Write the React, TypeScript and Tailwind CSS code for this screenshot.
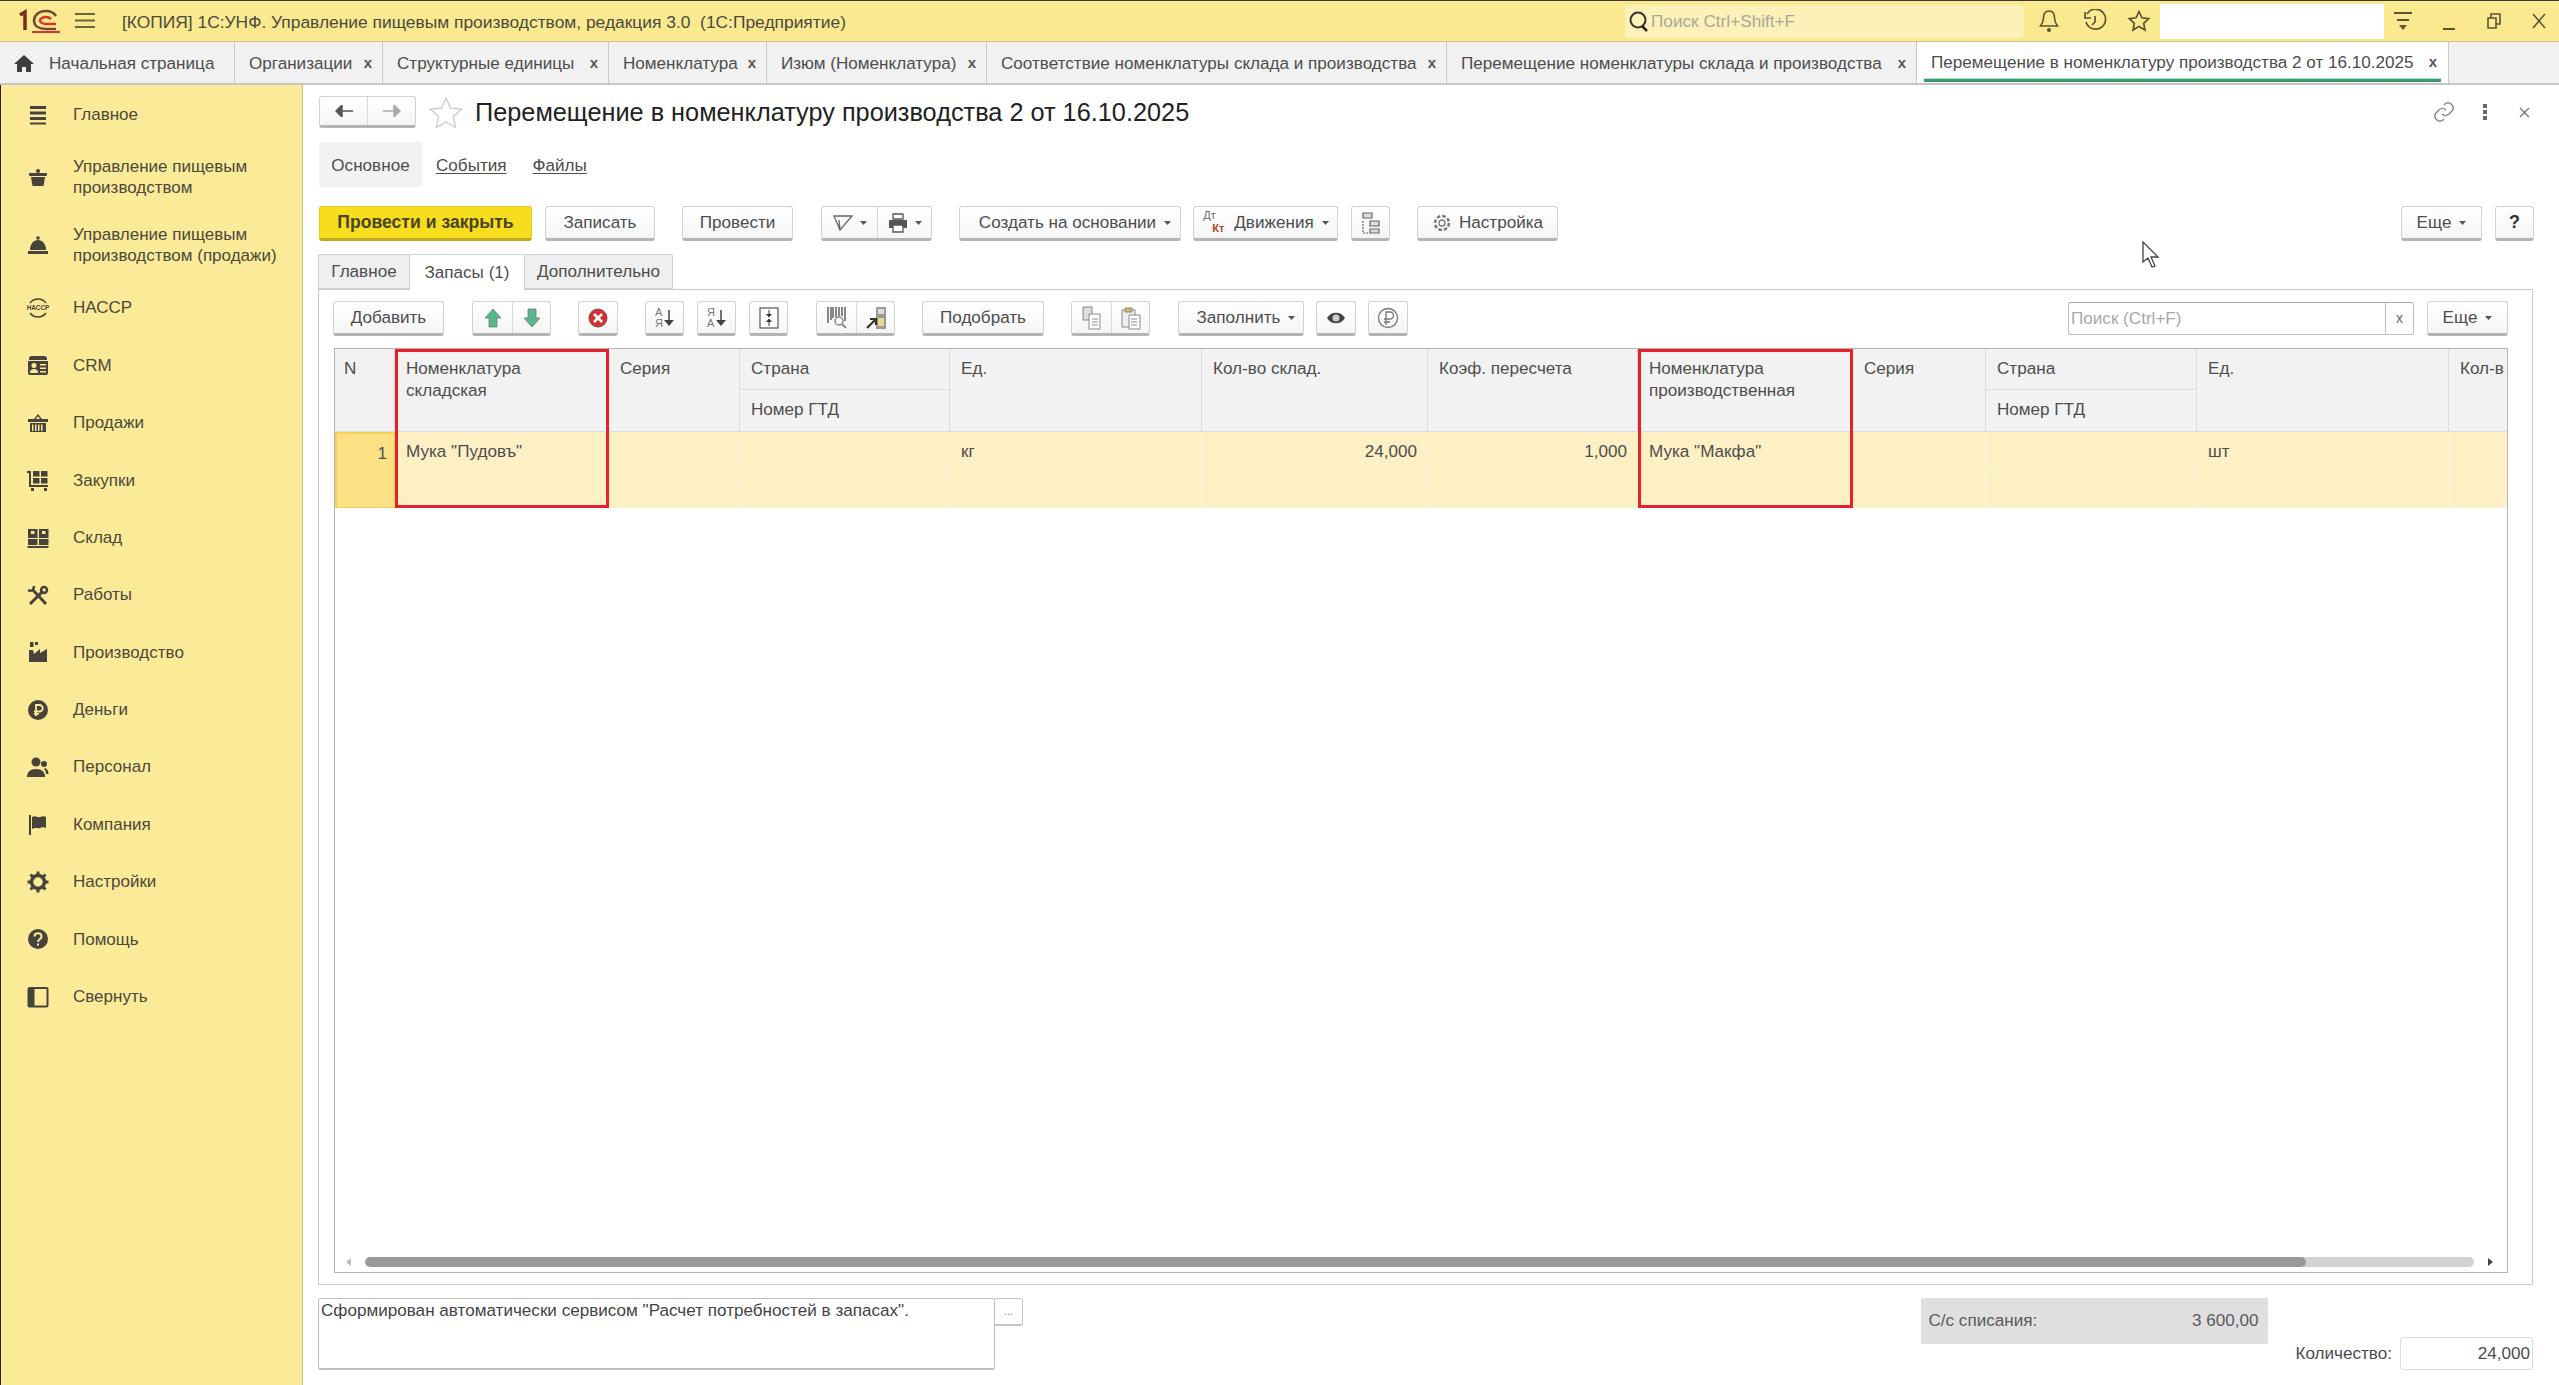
import type { ReactNode } from "react";

const font = "font-['Liberation_Sans',Arial,sans-serif]";

const btn =
  "flex items-center justify-center h-[35px] rounded-[3px] border border-[#d2d2d2] border-b-[3px] border-b-[#b4b4b4] bg-linear-to-b from-white to-[#f5f5f5] text-[#4d4d4d] text-[17.1px] shrink-0";

const Caret = ({ className = "" }: { className?: string }) => (
  <svg width="7" height="4" viewBox="0 0 7 4" className={className}>
    <path d="M0 0h7L3.500 4z" fill="#555" />
  </svg>
);

// sidebar icons, all in a 24 box
const ink = "#47433a";
const SideIcons: Record<string, ReactNode> = {
  main: (
    <g fill={ink}>
      <rect x="4" y="3" width="16" height="3" />
      <rect x="4" y="8.500" width="16" height="3" />
      <rect x="4" y="14" width="16" height="3" />
      <rect x="4" y="19.500" width="16" height="2" />
    </g>
  ),
  pot: (
    <g fill={ink}>
      <circle cx="12" cy="6" r="2" />
      <rect x="3" y="8" width="18" height="3" rx="1" />
      <path d="M5 12h14l-1.500 9h-11z" />
    </g>
  ),
  bell: (
    <g fill={ink}>
      <circle cx="12" cy="5" r="1.800" />
      <path d="M4 17c0-6 3.500-10 8-10s8 4 8 10z" />
      <rect x="2" y="18" width="20" height="3" />
    </g>
  ),
  haccp: (
    <g>
      <path d="M4 7a10 10 0 0 1 16 0M4 17a10 10 0 0 0 16 0" fill="none" stroke={ink} strokeWidth="1.500" />
      <text x="12" y="14.300" textAnchor="middle" fontSize="6.400" fontWeight="700" fill={ink} fontFamily="Liberation Sans">
        HACCP
      </text>
    </g>
  ),
  crm: (
    <g fill={ink}>
      <path d="M3 6a3 3 0 0 1 3-3h12a3 3 0 0 1 3 3v1H3z" />
      <path fillRule="evenodd" d="M2 8h20v12a2 2 0 0 1-2 2H4a2 2 0 0 1-2-2zm6 2a2.500 2.500 0 1 0 0 5 2.500 2.500 0 0 0 0-5zm-4 10h8c0-3-1.500-4-4-4s-4 1-4 4zm10-9v1.500h6V11zm0 3.500V16h6v-1.500zm0 3.500v1.500h6V18z" />
    </g>
  ),
  basket: (
    <g fill={ink}>
      <path d="M8 8l4-5 4 5h-1.800L12 5.200 9.800 8z" />
      <path fillRule="evenodd" d="M2 8h20v3H2zM4 12h16v9H4zm2 1.500V20h1.500v-6.500zm3 0V20h1.500v-6.500zm3 0V20h1.500v-6.500zm3 0V20h1.500v-6.500z" />
    </g>
  ),
  cart: (
    <g fill={ink}>
      <path d="M1 3h4v14h17v2H3V5H1z" />
      <rect x="7" y="3" width="6.500" height="5.500" />
      <rect x="15" y="3" width="6.500" height="5.500" />
      <rect x="7" y="10" width="6.500" height="5.500" />
      <rect x="15" y="10" width="6.500" height="5.500" />
      <rect x="5" y="20" width="3" height="3" />
      <rect x="18" y="20" width="3" height="3" />
    </g>
  ),
  stock: (
    <g fill={ink}>
      <path fillRule="evenodd" d="M2 3h9.500v9H2zm3 2v3h3.500V5zM13 3h9.500v9H13zm3 2v3h3.500V5z" />
      <rect x="2" y="13" width="9.500" height="6" />
      <rect x="13" y="13" width="9.500" height="6" />
      <rect x="1.500" y="20" width="21" height="2" />
    </g>
  ),
  tools: (
    <g fill="none" stroke={ink} strokeWidth="3">
      <path d="M4 21L17 8" />
      <path d="M6 6l14 15" />
      <path d="M2 7c3 2 6 0 6-4" strokeWidth="2.500" />
      <circle cx="18" cy="7" r="3" strokeWidth="2.500" />
    </g>
  ),
  factory: (
    <g fill={ink}>
      <rect x="4" y="2" width="3.500" height="5" />
      <rect x="9" y="2" width="3" height="3" />
      <path d="M3 22V10l4 0 1 4 6-5v4l7-4v13z" />
    </g>
  ),
  money: (
    <g>
      <circle cx="12" cy="12" r="10" fill={ink} />
      <path d="M10 18V7h3.500a3 3 0 0 1 0 6.500H8M8 15.800h5" fill="none" stroke="#fbeb98" strokeWidth="1.800" />
    </g>
  ),
  people: (
    <g fill={ink}>
      <circle cx="10" cy="7" r="4.500" />
      <path d="M1 22c0-5 3-8 9-8s9 3 9 8z" />
      <circle cx="18" cy="9" r="3" />
      <path d="M19 13c2 .5 3.500 2.500 3.500 6H20c0-2.500-1-4.500-2-5z" />
    </g>
  ),
  flag: (
    <g fill={ink}>
      <rect x="3" y="2" width="2" height="20" />
      <path d="M6 4c4-2 5 1 8 0s5-1 6 0v11c-2-1-4-1-6 0s-5-1-8 1z" />
    </g>
  ),
  gear: (
    <g>
      <circle cx="12" cy="12" r="6.500" fill="none" stroke={ink} strokeWidth="3.500" />
      <path d="M12 1.500v4M12 18.500v4M1.500 12h4M18.500 12h4M4.500 4.500l3 3M16.500 16.500l3 3M4.500 19.500l3-3M16.500 7.500l3-3" stroke={ink} strokeWidth="3" />
    </g>
  ),
  help: (
    <g>
      <circle cx="12" cy="12" r="10" fill={ink} />
      <path d="M8.500 9.500c0-4.500 7-4.500 7 0 0 3-3.500 2.500-3.500 5.500" fill="none" stroke="#fbeb98" strokeWidth="2" />
      <rect x="11" y="16.500" width="2" height="2" fill="#fbeb98" />
    </g>
  ),
  collapse: (
    <g>
      <rect x="2.500" y="3" width="19" height="18.500" rx="1" fill="none" stroke={ink} strokeWidth="2" />
      <rect x="2.500" y="3" width="6" height="18.500" fill={ink} />
    </g>
  ),
};

const sideItems: { icon: string; lines: string[]; two?: boolean }[] = [
  { icon: "main", lines: ["Главное"] },
  { icon: "pot", lines: ["Управление пищевым", "производством"], two: true },
  { icon: "bell", lines: ["Управление пищевым", "производством (продажи)"], two: true },
  { icon: "haccp", lines: ["НАССР"] },
  { icon: "crm", lines: ["CRM"] },
  { icon: "basket", lines: ["Продажи"] },
  { icon: "cart", lines: ["Закупки"] },
  { icon: "stock", lines: ["Склад"] },
  { icon: "tools", lines: ["Работы"] },
  { icon: "factory", lines: ["Производство"] },
  { icon: "money", lines: ["Деньги"] },
  { icon: "people", lines: ["Персонал"] },
  { icon: "flag", lines: ["Компания"] },
  { icon: "gear", lines: ["Настройки"] },
  { icon: "help", lines: ["Помощь"] },
  { icon: "collapse", lines: ["Свернуть"] },
];

const tabs = [
  { title: "Организации", w: "w-[148px]" },
  { title: "Структурные единицы", w: "w-[226px]" },
  { title: "Номенклатура", w: "w-[158px]" },
  { title: "Изюм (Номенклатура)", w: "w-[220px]" },
  { title: "Соответствие номенклатуры склада и производства", w: "w-[460px]" },
  { title: "Перемещение номенклатуры склада и производства", w: "w-[470px]" },
];

const TitleBar = () => (
  <div className="flex items-center h-[42px] shrink-0 bg-[#fbe98f] border-t border-t-[#3a3a3a] border-b border-b-[#cfc48a]">
    {/* 1C logo */}
    <svg width="44" height="26" viewBox="0 0 44 26" className="ml-[18px]">
      <path d="M2 7l5-3v18" fill="none" stroke="#7a2a20" strokeWidth="3.500" />
      <path d="M38 8c-2-3-5-5-10-5-7 0-12 4-12 9.500S21 21 28 21h10" fill="none" stroke="#6d4a36" strokeWidth="2.500" />
      <path d="M33 11c-1-1-3-2-5-2-3 0-6 1.500-6 3.500S25 16 28 16h10" fill="none" stroke="#d8352a" strokeWidth="2.500" />
      <path d="M14 24h28" stroke="#d8352a" strokeWidth="2" />
    </svg>
    <svg width="20" height="18" viewBox="0 0 20 18" className="ml-[13px]">
      <path d="M0 2h20M0 8.500h20M0 15h20" stroke="#6b6440" strokeWidth="2" />
    </svg>
    <span className="ml-[27px] pt-[2px] text-[17.4px] text-[#4a4a40] whitespace-nowrap">
      [КОПИЯ] 1С:УНФ. Управление пищевым производством, редакция 3.0&nbsp; (1С:Предприятие)
    </span>
    <div className="flex-1" />
    <div className="flex items-center w-[399px] h-[33px] rounded-[3px] bg-[#fcf1b6]">
      <svg width="22" height="24" viewBox="0 0 22 24" className="ml-[3px]">
        <circle cx="10" cy="11" r="7.500" fill="none" stroke="#333" strokeWidth="2" />
        <path d="M14 17l5 5" stroke="#222" strokeWidth="2.500" />
      </svg>
      <span className="ml-[1px] pt-[2px] text-[17.2px] text-[#a8a8a0]">Поиск Ctrl+Shift+F</span>
    </div>
    <div className="flex items-center justify-center w-[46px] ml-[2px]">
      <svg width="20" height="24" viewBox="0 0 20 24">
        <path d="M10 2c-4 0-5.500 3-5.500 7 0 4-1.500 6-3 8h17c-1.500-2-3-4-3-8 0-4-1.500-7-5.500-7z" fill="none" stroke="#5a5436" strokeWidth="1.600" />
        <circle cx="10" cy="21" r="2" fill="#5a5436" />
      </svg>
    </div>
    <div className="flex items-center justify-center w-[46px]">
      <svg width="24" height="24" viewBox="0 0 24 24">
        <path d="M4 5a10 10 0 1 1-1 8" fill="none" stroke="#5a5436" strokeWidth="1.700" />
        <path d="M2 3v6h6" fill="none" stroke="#5a5436" strokeWidth="1.700" />
        <path d="M12 7v6l-3 3" fill="none" stroke="#5a5436" strokeWidth="1.700" />
      </svg>
    </div>
    <div className="flex items-center justify-center w-[42px]">
      <svg width="24" height="24" viewBox="0 0 24 24">
        <path d="M12 2.500l2.900 6.300 6.800.8-5 4.700 1.300 6.700-6-3.400-6 3.400 1.300-6.700-5-4.700 6.800-.8z" fill="none" stroke="#5a5436" strokeWidth="1.700" />
      </svg>
    </div>
    <div className="w-[224px] h-[35px] bg-white" />
    <div className="flex items-center justify-center w-[38px]">
      <svg width="20" height="22" viewBox="0 0 20 22">
        <path d="M1 3h18M4 10h12" stroke="#5a5436" strokeWidth="1.800" />
        <path d="M6 15h8l-4 5z" fill="#5a5436" />
      </svg>
    </div>
    <div className="flex items-center justify-center w-[54px]">
      <svg width="12" height="20" viewBox="0 0 12 20">
        <path d="M0 18h12" stroke="#5a5436" strokeWidth="2" />
      </svg>
    </div>
    <div className="flex items-center justify-center w-[36px]">
      <svg width="14" height="16" viewBox="0 0 14 16">
        <path d="M1 5h8v10H1zM4 5V1h9v10H9" fill="none" stroke="#5a5436" strokeWidth="1.600" />
      </svg>
    </div>
    <div className="flex items-center justify-center w-[40px] ml-[7px]">
      <svg width="14" height="16" viewBox="0 0 14 16">
        <path d="M1 1l12 14M13 1L1 15" stroke="#5a5436" strokeWidth="1.500" />
      </svg>
    </div>
  </div>
);

const TabBar = () => (
  <div className="flex h-[43px] shrink-0 bg-[#f1f1f1] border-b-2 border-b-[#c6c6c6] text-[17.1px] text-[#4d4d4d]">
    <div className="flex items-center w-[235px] border-r border-r-[#c9c9c9] shrink-0">
      <svg width="20" height="18" viewBox="0 0 20 18" className="ml-[14px]">
        <path d="M10 1L0 10h3v8h5v-5h4v5h5v-8h3z" fill="#3f3f3f" />
      </svg>
      <span className="ml-[15px] pt-[2px] whitespace-nowrap">Начальная страница</span>
    </div>
    {tabs.map((t) => (
      <div
        key={t.title}
        className={`flex items-center justify-between pl-[14px] pr-[10px] pt-[2px] border-r border-r-[#c9c9c9] shrink-0 ${t.w}`}
      >
        <span className="whitespace-nowrap">{t.title}</span>
        <span className="font-bold text-[15px] text-[#555]">x</span>
      </div>
    ))}
    <div className="flex items-center justify-between w-[532px] pl-[14px] pr-[11px] bg-white border-r border-r-[#c9c9c9] shrink-0 relative">
      <span className="whitespace-nowrap">Перемещение в номенклатуру производства 2 от 16.10.2025</span>
      <span className="font-bold text-[15px] text-[#555]">x</span>
      <div className="absolute left-[7px] right-[7px] bottom-[1px] h-[3px] bg-[#3d9a6e] shadow-[0_-1px_0_#a8e6c8]" />
    </div>
    <div className="flex-1" />
  </div>
);

const Sidebar = () => (
  <aside className="w-[303px] shrink-0 bg-[#fbeb98] border-l border-l-[#222] border-r border-r-[#cfc48a] pt-[1px] flex flex-col text-[17px] leading-[21.500px] text-[#4b483c]">
    {sideItems.map((s) => (
      <div key={s.lines[0] + s.icon} className={`flex items-center shrink-0 ${s.two ? "h-[68px]" : "h-[57.400px]"}`}>
        <svg width="24" height="24" viewBox="0 0 24 24" className="ml-[25px] shrink-0">
          {SideIcons[s.icon]}
        </svg>
        <div className="ml-[23px] whitespace-nowrap">
          {s.lines.map((l) => (
            <div key={l}>{l}</div>
          ))}
        </div>
      </div>
    ))}
  </aside>
);

const FormHead = () => (
  <>
    <div className="flex items-center h-[32px] mt-[11px] pr-[27px]">
      <div className={`${btn} !h-[32px] w-[97px] ml-[1px]`}>
        <div className="flex items-center justify-center w-[48px] h-full border-r border-r-[#d8d8d8]">
          <svg width="18" height="12" viewBox="0 0 18 12">
            <path d="M18 6H6M7 0L1 6l6 6z" fill="#555" stroke="#555" strokeWidth="1.500" />
          </svg>
        </div>
        <div className="flex items-center justify-center flex-1 h-full">
          <svg width="18" height="12" viewBox="0 0 18 12">
            <path d="M0 6h12M11 0l6 6-6 6z" fill="#aaa" stroke="#aaa" strokeWidth="1.500" />
          </svg>
        </div>
      </div>
      <svg width="34" height="32" viewBox="0 0 34 32" className="ml-[13px]">
        <path d="M17 2l4.500 10 11 1.200-8.200 7.400 2.300 10.800L17 26l-9.600 5.400 2.300-10.800L1.500 13.200l11-1.200z" fill="#fff" stroke="#d0d0d0" strokeWidth="1.500" />
      </svg>
      <h1 className="ml-[12px] pt-[2px] text-[25.3px] font-normal text-[#222] whitespace-nowrap">
        Перемещение в номенклатуру производства 2 от 16.10.2025
      </h1>
      <div className="flex-1" />
      <svg width="24" height="24" viewBox="0 0 24 24" className="mr-[27px]">
        <path d="M10 14a5 5 0 0 0 7 0l3-3a5 5 0 0 0-7-7l-1 1M14 10a5 5 0 0 0-7 0l-3 3a5 5 0 0 0 7 7l1-1" fill="none" stroke="#8a8a8a" strokeWidth="1.500" />
      </svg>
      <svg width="4" height="16" viewBox="0 0 4 16" className="mr-[32px]">
        <path d="M0 0h4v4H0zM0 6h4v4H0zM0 12h4v4H0z" fill="#666" />
      </svg>
      <svg width="11" height="11" viewBox="0 0 11 11" className="mr-[2px]">
        <path d="M1 1l9 9M10 1l-9 9" stroke="#777" strokeWidth="1.400" />
      </svg>
    </div>

    <div className="flex items-center h-[45px] mt-[14px] ml-[1px] pt-[2px] text-[17.1px] text-[#4d4d4d]">
      <div className="flex items-center justify-center w-[103px] h-[45px] -mt-[2px] pt-[2px] bg-[#f2f2f2] rounded-[3px]">Основное</div>
      <span className="ml-[14px] underline underline-offset-2">События</span>
      <span className="ml-[26px] underline underline-offset-2">Файлы</span>
    </div>

    <div className="flex items-center h-[35px] mt-[19px] ml-[1px] mr-[25px]">
      <div className={`${btn} w-[213px] !bg-none !bg-[#f6dd1e] !border-[#e2c820] !border-b-[#bda618] font-bold !text-[#4a4520] !text-[17.6px]`}>
        Провести и закрыть
      </div>
      <div className={`${btn} w-[110px] ml-[13px]`}>Записать</div>
      <div className={`${btn} w-[111px] ml-[27px]`}>Провести</div>
      <div className={`${btn} w-[111px] ml-[28px]`}>
        <div className="flex items-center justify-center gap-[7px] w-[56px] h-full border-r border-r-[#d8d8d8]">
          <svg width="20" height="18" viewBox="0 0 20 18">
            <path d="M1 2h18L7 16z M7 16L6 6" fill="none" stroke="#666" strokeWidth="1.300" />
          </svg>
          <Caret />
        </div>
        <div className="flex items-center justify-center gap-[7px] flex-1 h-full">
          <svg width="20" height="20" viewBox="0 0 20 20">
            <path d="M5 1h10v5H5z" fill="none" stroke="#555" strokeWidth="1.300" />
            <path d="M1 7h18v8H1z" fill="#555" />
            <path d="M5 12h10v7H5z" fill="#fff" stroke="#555" strokeWidth="1.300" />
          </svg>
          <Caret />
        </div>
      </div>
      <div className={`${btn} w-[222px] ml-[27px] gap-[8px] pl-[10px]`}>
        Создать на основании <Caret />
      </div>
      <div className={`${btn} w-[145px] ml-[12px] pl-[1px]`}>
        <span className="relative w-[22px] h-[26px] mr-[9px] text-[11px] leading-none font-normal">
          <span className="absolute left-0 top-0 text-[#666]">Дт</span>
          <span className="absolute left-[9px] top-[13px] font-bold text-[#b5451b]">Кт</span>
        </span>
        Движения
        <Caret className="ml-[8px]" />
      </div>
      <div className={`${btn} w-[39px] ml-[13px]`}>
        <svg width="20" height="22" viewBox="0 0 20 22" fill="none" stroke="#666" strokeWidth="1.200">
          <path d="M2 1h9v5H2zM9 9h9v5H9zM9 17h9v4H9z" fill="#ddd" />
          <path d="M2 9v12h5" strokeDasharray="2 1" />
        </svg>
      </div>
      <div className={`${btn} w-[141px] ml-[27px]`}>
        <svg width="20" height="20" viewBox="0 0 20 20" fill="none" stroke="#777" strokeWidth="1.300" className="mr-[7px]">
          <circle cx="10" cy="10" r="3" />
          <circle cx="10" cy="10" r="7" strokeDasharray="3.500 2" strokeWidth="2.500" />
        </svg>
        Настройка
      </div>
      <div className="flex-1" />
      <div className={`${btn} w-[81px] gap-[8px]`}>
        Еще <Caret />
      </div>
      <div className={`${btn} w-[39px] ml-[13px] font-bold !text-[#333] !text-[18px]`}>?</div>
    </div>

    {/* form page tabs */}
    <div className="flex items-end h-[36px] mt-[12px] text-[17.1px] text-[#4d4d4d]">
      <div className="flex items-center justify-center w-[92px] h-[35px] bg-[#efefef] border border-[#d0d0d0] rounded-t-[2px]">Главное</div>
      <div className="flex items-center justify-center w-[114px] h-[36px] bg-white border-t border-t-[#d0d0d0] relative z-10 -mb-[1px]">Запасы (1)</div>
      <div className="flex items-center justify-center w-[149px] h-[35px] bg-[#efefef] border border-[#d0d0d0] rounded-t-[2px]">Дополнительно</div>
    </div>
  </>
);

const Letters = ({ top, bottom }: { top: string; bottom: string }) => (
  <div className="flex items-center gap-[1px]">
    <div className="flex flex-col text-[11px] leading-[11px] text-[#777]">
      <span>{top}</span>
      <span>{bottom}</span>
    </div>
    <svg width="10" height="20" viewBox="0 0 10 20">
      <path d="M5 2v12" stroke="#444" strokeWidth="1.500" />
      <path d="M0 12h10l-5 6z" fill="#444" />
    </svg>
  </div>
);

const Doc = ({ clip }: { clip?: boolean }) => (
  <svg width="22" height="24" viewBox="0 0 22 24" fill="#fff" stroke="#888" strokeWidth="1">
    {clip ? (
      <>
        <path d="M2 4h13v17H2z" fill="#eee" />
        <path d="M5 2h7v4H5z" fill="#d9b766" />
        <path d="M9 9h11v14H9z" />
      </>
    ) : (
      <>
        <path d="M2 1h9v13H2z" fill="#ddd" />
        <path d="M8 8h11v15H8z" />
      </>
    )}
    <path d="M11 13h6M11 16h6M11 19h6" />
  </svg>
);

const PanelToolbar = () => (
  <div className="flex items-center h-[35px] mt-[11px]">
    <div className={`${btn} w-[111px] -ml-[1px]`}>Добавить</div>
    <div className={`${btn} w-[79px] ml-[28px]`}>
      <div className="flex items-center justify-center w-[40px] h-full border-r border-r-[#d8d8d8]">
        <svg width="18" height="20" viewBox="0 0 18 20">
          <path d="M9 1l8 9h-4v9H5v-9H1z" fill="#54b78d" stroke="#777" strokeWidth=".8" />
        </svg>
      </div>
      <div className="flex items-center justify-center flex-1 h-full">
        <svg width="18" height="20" viewBox="0 0 18 20">
          <path d="M9 19l8-9h-4V1H5v9H1z" fill="#54b78d" stroke="#777" strokeWidth=".8" />
        </svg>
      </div>
    </div>
    <div className={`${btn} w-[40px] ml-[27px]`}>
      <svg width="20" height="20" viewBox="0 0 20 20">
        <circle cx="10" cy="10" r="9" fill="#d22f3a" stroke="#8a4a3a" />
        <path d="M6 6l8 8M14 6l-8 8" stroke="#fff" strokeWidth="2.500" />
      </svg>
    </div>
    <div className={`${btn} w-[39px] ml-[27px]`}>
      <Letters top="А" bottom="Я" />
    </div>
    <div className={`${btn} w-[39px] ml-[13px]`}>
      <Letters top="Я" bottom="А" />
    </div>
    <div className={`${btn} w-[39px] ml-[13px]`}>
      <svg width="20" height="22" viewBox="0 0 20 22">
        <rect x="1" y="1" width="18" height="20" fill="#fff" stroke="#555" strokeWidth="1.200" />
        <path d="M10 3v5M10 14v5" stroke="#333" />
        <path d="M7 7h6l-3 3.500zM7 15h6l-3-3.500z" fill="#333" />
      </svg>
    </div>
    <div className={`${btn} w-[79px] ml-[28px]`}>
      <div className="flex items-center justify-center w-[40px] h-full border-r border-r-[#d8d8d8]">
        <svg width="22" height="24" viewBox="0 0 22 24">
          <path d="M2 1v16M5 1v13M7 1v11M10 1v10M13 1v9M16 1v9M19 1v14" stroke="#555" strokeWidth="1.400" />
          <circle cx="13" cy="15" r="4" fill="#fff" stroke="#888" strokeWidth="1.500" />
          <path d="M16 18l4 4" stroke="#888" strokeWidth="2" />
        </svg>
      </div>
      <div className="flex items-center justify-center flex-1 h-full">
        <svg width="22" height="24" viewBox="0 0 22 24">
          <path d="M11 1h10v22H11z" fill="#999" />
          <path d="M13 3h6v5h-6z" fill="#ddd" />
          <path d="M13 12h6v8h-6z" fill="#e8d890" />
          <path d="M2 22l8-8M5 13h6v6" fill="none" stroke="#333" strokeWidth="2.200" />
        </svg>
      </div>
    </div>
    <div className={`${btn} w-[122px] ml-[27px]`}>Подобрать</div>
    <div className={`${btn} w-[79px] ml-[27px]`}>
      <div className="flex items-center justify-center w-[40px] h-full border-r border-r-[#d8d8d8]">
        <Doc />
      </div>
      <div className="flex items-center justify-center flex-1 h-full">
        <Doc clip />
      </div>
    </div>
    <div className={`${btn} w-[126px] ml-[28px] gap-[8px] pl-[10px]`}>
      Заполнить <Caret />
    </div>
    <div className={`${btn} w-[40px] ml-[12px]`}>
      <svg width="20" height="14" viewBox="0 0 20 14">
        <path d="M1 7c4-7 14-7 18 0-4 7-14 7-18 0z" fill="#444" />
        <circle cx="10" cy="7" r="3.500" fill="#ccc" />
      </svg>
    </div>
    <div className={`${btn} w-[40px] ml-[12px]`}>
      <svg width="22" height="22" viewBox="0 0 22 22" fill="none" stroke="#777" strokeWidth="1.300">
        <circle cx="11" cy="11" r="9.500" />
        <path d="M9 18V5h4a3.500 3.500 0 0 1 0 7H7M7 15h6" />
      </svg>
    </div>
    <div className="flex-1" />
    <div className="flex w-[346px] h-[33px] rounded-[3px] border border-[#bdbdbd] border-t-[#a8a8a8] bg-white text-[17.1px] text-[#a8a8a8]">
      <span className="flex-1 flex items-center pl-[2px]">Поиск (Ctrl+F)</span>
      <span className="flex items-center justify-center w-[28px] border-l border-l-[#bdbdbd] text-[#666] text-[14px]">x</span>
    </div>
    <div className={`${btn} w-[81px] ml-[13px] gap-[8px]`}>
      Еще <Caret />
    </div>
  </div>
);

const headCell = "border-r border-b border-[#dcdcdc] bg-[#f2f2f2] pl-[11px] pr-[4px] pt-[9px] leading-[21.500px] whitespace-nowrap overflow-hidden";
const rowCell = "border-r border-b border-[#fbf3d8] bg-[#fdf0c5] pl-[11px] pr-[10px] pt-[9px] leading-[21.500px] whitespace-nowrap overflow-hidden";

const Table = () => (
  <div className="flex flex-col mt-[12px] h-[925px] border border-[#b5b5b5] text-[17.1px] text-[#4d4d4d] overflow-hidden">
    <div className="grid grid-cols-[60px_214px_131px_210px_252px_226px_210px_215px_133px_211px_252px_58px] grid-rows-[41px_42px_38px_38px]">
      <div className={`${headCell} col-start-1 row-start-1 row-span-2 !pl-[9px]`}>N</div>
      <div className={`${headCell} col-start-2 row-start-1 row-span-2`}>
        Номенклатура
        <br />
        складская
      </div>
      <div className={`${headCell} col-start-3 row-start-1 row-span-2`}>Серия</div>
      <div className={`${headCell} col-start-4 row-start-1`}>Страна</div>
      <div className={`${headCell} col-start-4 row-start-2`}>Номер ГТД</div>
      <div className={`${headCell} col-start-5 row-start-1 row-span-2`}>Ед.</div>
      <div className={`${headCell} col-start-6 row-start-1 row-span-2`}>Кол-во склад.</div>
      <div className={`${headCell} col-start-7 row-start-1 row-span-2`}>Коэф. пересчета</div>
      <div className={`${headCell} col-start-8 row-start-1 row-span-2`}>
        Номенклатура
        <br />
        производственная
      </div>
      <div className={`${headCell} col-start-9 row-start-1 row-span-2`}>Серия</div>
      <div className={`${headCell} col-start-10 row-start-1`}>Страна</div>
      <div className={`${headCell} col-start-10 row-start-2`}>Номер ГТД</div>
      <div className={`${headCell} col-start-11 row-start-1 row-span-2`}>Ед.</div>
      <div className={`${headCell} col-start-12 row-start-1 row-span-2 !border-r-0`}>Кол-в</div>

      <div className={`${rowCell} col-start-1 row-start-3 row-span-2 !bg-[#fbe184] border-2 !border-[#f3d255] text-right !pr-[7px]`}>1</div>
      <div className={`${rowCell} col-start-2 row-start-3 row-span-2`}>Мука "Пудовъ"</div>
      <div className={`${rowCell} col-start-3 row-start-3 row-span-2`} />
      <div className={`${rowCell} col-start-4 row-start-3`} />
      <div className={`${rowCell} col-start-4 row-start-4`} />
      <div className={`${rowCell} col-start-5 row-start-3 row-span-2`}>кг</div>
      <div className={`${rowCell} col-start-6 row-start-3 row-span-2 text-right`}>24,000</div>
      <div className={`${rowCell} col-start-7 row-start-3 row-span-2 text-right`}>1,000</div>
      <div className={`${rowCell} col-start-8 row-start-3 row-span-2`}>Мука "Макфа"</div>
      <div className={`${rowCell} col-start-9 row-start-3 row-span-2`} />
      <div className={`${rowCell} col-start-10 row-start-3`} />
      <div className={`${rowCell} col-start-10 row-start-4`} />
      <div className={`${rowCell} col-start-11 row-start-3 row-span-2`}>шт</div>
      <div className={`${rowCell} col-start-12 row-start-3 row-span-2`} />

      {/* red annotation frames */}
      <div className="col-start-2 row-start-1 row-span-4 z-10 border-[3px] border-[#e8202a] pointer-events-none" />
      <div className="col-start-8 row-start-1 row-span-4 z-10 border-[3px] border-[#e8202a] pointer-events-none" />
    </div>
    <div className="flex-1" />
    {/* horizontal scrollbar */}
    <div className="flex items-center h-[10px] mb-[5px] shrink-0">
      <svg width="5" height="8" viewBox="0 0 5 8" className="ml-[11px]">
        <path d="M5 0v8L0 4z" fill="#bbb" />
      </svg>
      <div className="flex h-full w-[2109px] ml-[14px] rounded-full bg-[#d2d2d2] overflow-hidden">
        <div className="h-full w-[1941px] bg-[#9a9a9a] rounded-full" />
      </div>
      <svg width="5" height="8" viewBox="0 0 5 8" className="ml-[14px]">
        <path d="M0 0v8l5-4z" fill="#444" />
      </svg>
    </div>
  </div>
);

const Footer = () => (
  <div className="flex mt-[13px] text-[17.1px] text-[#4d4d4d]">
    <div className="w-[677px] h-[72px] rounded-[3px] border border-[#bdbdbd] border-b-2 pl-[2px] pt-[1px] leading-[21px] text-[#444]">
      Сформирован автоматически сервисом "Расчет потребностей в запасах".
    </div>
    <div className="flex items-center justify-center w-[28px] h-[28px] rounded-r-[3px] border border-l-0 border-[#c4c4c4] border-b-2 text-[#888] text-[11px]">
      ...
    </div>
    <div className="flex-1" />
    <div className="flex items-center justify-between w-[347px] h-[46px] bg-[#dfdfdf] pl-[7px] pr-[10px] text-[#5a5a5a]">
      <span>С/с списания:</span>
      <span>3 600,00</span>
    </div>
    <div className="flex items-center h-[33px] mt-[39px] ml-[27px] mr-[26px]">
      <span>Количество:</span>
      <div className="flex items-center justify-end w-[133px] h-full ml-[8px] rounded-[3px] border border-[#dcdcdc] pr-[2px]">24,000</div>
    </div>
  </div>
);

export default function App() {
  return (
    <div className={`relative flex flex-col w-screen h-screen overflow-hidden bg-white ${font}`}>
      <TitleBar />
      <TabBar />
      <div className="flex flex-1 min-h-0">
        <Sidebar />
        <main className="flex-1 min-w-0 flex flex-col pl-[15px]">
          <FormHead />
          <div className="flex flex-col h-[996px] mr-[26px] border border-[#c9c9c9] pl-[15px] pr-[24px]">
            <PanelToolbar />
            <Table />
          </div>
          <Footer />
        </main>
      </div>
      {/* mouse pointer */}
      <svg width="18" height="27" viewBox="0 0 18 27" className="absolute left-[2142px] top-[241px]">
        <path d="M1 1v20l5-4 4 9 3-1-4-9h7z" fill="#fff" stroke="#444" strokeWidth="1.300" />
      </svg>
    </div>
  );
}
